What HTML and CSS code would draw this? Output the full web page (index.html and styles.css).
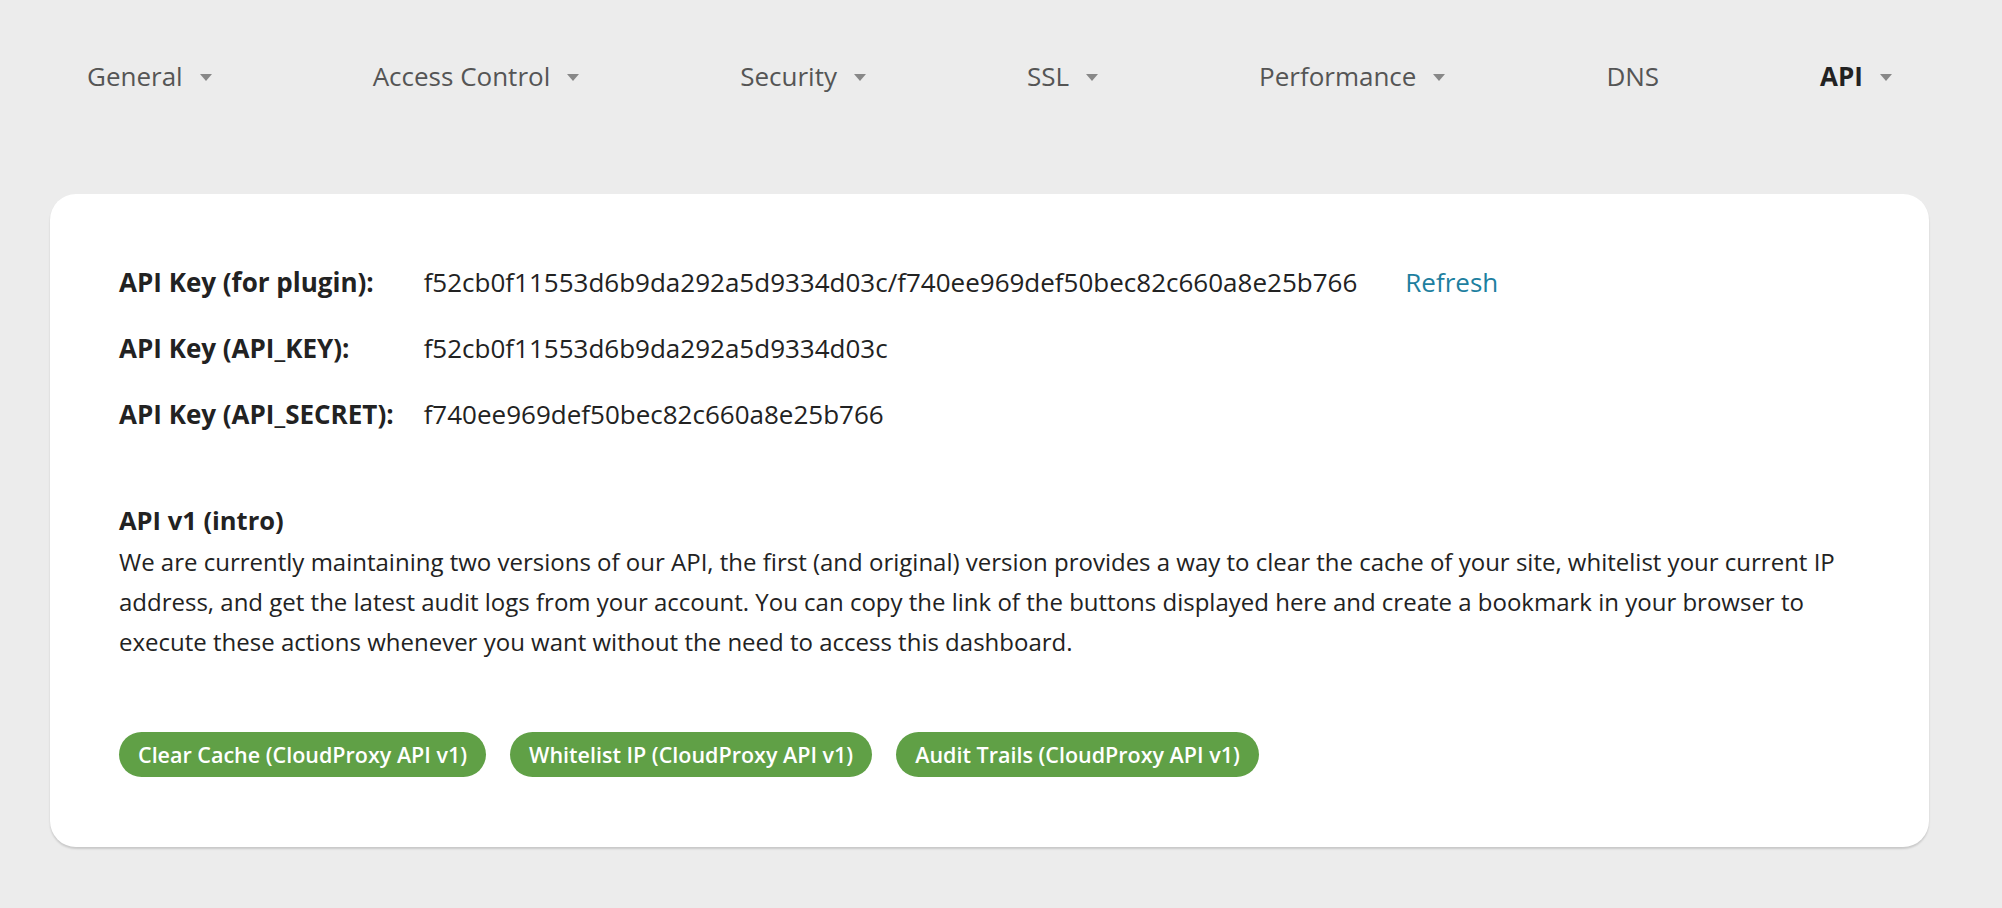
FILE: index.html
```html
<!DOCTYPE html>
<html>
<head>
<meta charset="utf-8">
<link rel="stylesheet" href="styles.css">
</head>
<body>
<div class="page">
  <nav class="nav">
    <a class="nav-item">General <span class="caret"></span></a>
    <a class="nav-item">Access Control <span class="caret"></span></a>
    <a class="nav-item">Security <span class="caret"></span></a>
    <a class="nav-item">SSL <span class="caret"></span></a>
    <a class="nav-item">Performance <span class="caret"></span></a>
    <a class="nav-item">DNS</a>
    <a class="nav-item active">API <span class="caret"></span></a>
  </nav>
  <section class="card">
    <div class="keys">
      <div class="key-label">API Key (for plugin):</div>
      <div class="key-value">f52cb0f11553d6b9da292a5d9334d03c/f740ee969def50bec82c660a8e25b766<a class="refresh">Refresh</a></div>
      <div class="key-label">API Key (API_KEY):</div>
      <div class="key-value">f52cb0f11553d6b9da292a5d9334d03c</div>
      <div class="key-label">API Key (API_SECRET):</div>
      <div class="key-value">f740ee969def50bec82c660a8e25b766</div>
    </div>
    <h3 class="section-title">API v1 (intro)</h3>
    <p class="intro">We are currently maintaining two versions of our API, the first (and original) version provides a way to clear the cache of your site, whitelist your current IP address, and get the latest audit logs from your account. You can copy the link of the buttons displayed here and create a bookmark in your browser to execute these actions whenever you want without the need to access this dashboard.</p>
    <div class="buttons">
      <a class="btn">Clear Cache (CloudProxy API v1)</a>
      <a class="btn">Whitelist IP (CloudProxy API v1)</a>
      <a class="btn">Audit Trails (CloudProxy API v1)</a>
    </div>
  </section>
</div>
</body>
</html>
```
FILE: styles.css
```css
html, body {
  margin: 0;
  padding: 0;
  background: #ececec;
  font-family: "Open Sans", "Noto Sans", sans-serif;
  color: #222;
}
.page {
  padding: 0 73px 40px 50px;
}
.nav {
  height: 152px;
  display: flex;
  align-items: center;
  justify-content: space-between;
  padding: 0 37px;
}
.nav-item {
  font-size: 26px;
  color: #555;
  display: flex;
  align-items: center;
  gap: 17px;
}
.nav-item.active {
  color: #222;
  font-weight: 700;
}
.caret {
  width: 0;
  height: 0;
  border-left: 6px solid transparent;
  border-right: 6px solid transparent;
  border-top: 7px solid #888;
  margin-top: 2px;
}
.card {
  margin-top: 42px;
  background: #fff;
  border-radius: 26px;
  box-shadow: 0 2px 2px rgba(0, 0, 0, 0.15);
  padding: 70px 69px 70px;
}
.keys {
  display: grid;
  grid-template-columns: max-content 1fr;
  column-gap: 30px;
  row-gap: 30px;
  font-size: 26px;
  line-height: 36px;
}
.key-label {
  font-weight: 700;
}
.key-value {
  color: #222;
}
.refresh {
  color: #1d7fa0;
  margin-left: 48px;
}
.section-title {
  margin: 70px 0 4px;
  font-size: 25.5px;
  line-height: 36px;
  font-weight: 700;
}
.intro {
  margin: 0;
  font-size: 24px;
  line-height: 40px;
  color: #222;
}
.buttons {
  margin-top: 70px;
  display: flex;
  gap: 24px;
}
.btn {
  height: 45px;
  border-radius: 23px;
  background: #60a046;
  color: #fff;
  font-size: 21.5px;
  font-weight: 600;
  display: flex;
  align-items: center;
  padding: 0 19px;
}
```
